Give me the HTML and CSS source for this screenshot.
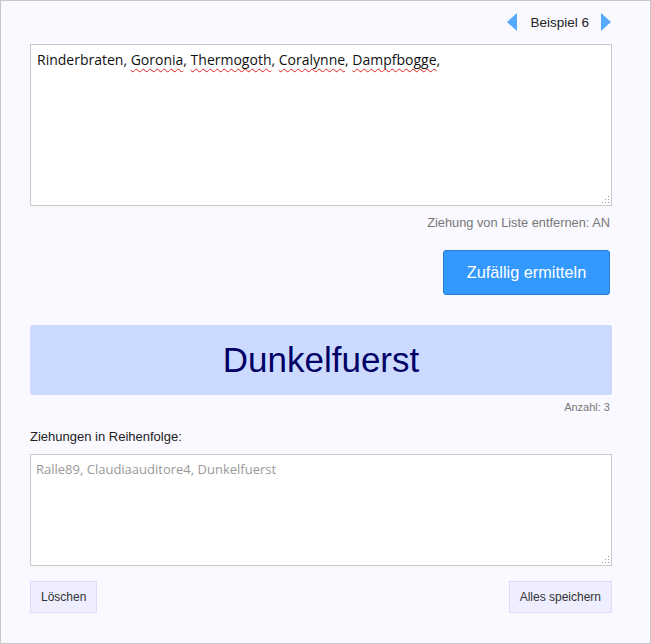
FILE: index.html
```html
<!DOCTYPE html>
<html lang="de">
<head>
    <meta charset="UTF-8">
    <meta name="viewport" content="width=device-width, initial-scale=1.0">
    <title>Zufallsgenerator</title>
    <link rel="stylesheet" href="styles.css">
</head>
<body>
    <div class="panel">
        <div class="examples">
            <span class="arrow arrow-left"></span>
            <span class="example-label">Beispiel 6</span>
            <span class="arrow arrow-right"></span>
        </div>

        <div class="names-box">
            <div class="names-text">Rinderbraten, <span class="typo">Goronia</span>, <span class="typo">Thermogoth</span>, <span class="typo">Coralynne</span>, <span class="typo">Dampfbogge</span>,</div>
            <span class="grip"></span>
        </div>

        <div class="option">Ziehung von Liste entfernen: AN</div>

        <div class="actions">
            <button class="draw-btn" type="button">Zufällig ermitteln</button>
        </div>

        <div class="result">Dunkelfuerst</div>
        <div class="count">Anzahl: 3</div>

        <div class="history-label">Ziehungen in Reihenfolge:</div>
        <div class="history-box">
            <div class="history-text">Ralle89, Claudiaauditore4, Dunkelfuerst</div>
            <span class="grip"></span>
        </div>

        <div class="footer">
            <button class="small-btn" type="button">Löschen</button>
            <button class="small-btn" type="button">Alles speichern</button>
        </div>
    </div>
</body>
</html>
```

FILE: styles.css
```css
* {
    box-sizing: border-box;
}

body {
    margin: 0;
    background-color: #fff;
    font-family: 'Liberation Sans', Arial, sans-serif;
}

.panel {
    width: 651px;
    height: 644px;
    background-color: #f9f9ff;
    border: 1px solid #c8c8c8;
    padding: 11px 38px 0 29px;
}

.examples {
    display: flex;
    justify-content: flex-end;
    align-items: center;
    height: 20px;
    margin-right: 1px;
}

.arrow {
    width: 0;
    height: 0;
    border-top: 9px solid transparent;
    border-bottom: 9px solid transparent;
}

.arrow-left {
    border-right: 10px solid #55aaff;
}

.arrow-right {
    border-left: 10px solid #55aaff;
}

.example-label {
    font-size: 13.5px;
    color: #222;
    margin: 0 12px 0 13px;
}

.names-box,
.history-box {
    position: relative;
    background-color: #fff;
    border: 1px solid #c8c8c8;
    font-family: 'Open Sans', sans-serif;
}

.names-box {
    height: 162px;
    margin-top: 12px;
    padding: 5px 6px;
    font-size: 14px;
    color: #111;
}

.typo {
    text-decoration: underline wavy #e02020;
    text-decoration-thickness: 1px;
    text-underline-offset: 3px;
}

.grip {
    position: absolute;
    right: 2px;
    bottom: 2px;
    width: 8px;
    height: 8px;
    background:
        radial-gradient(circle, #999 0.8px, transparent 1px) 0 0 / 3px 3px;
    clip-path: polygon(100% 0, 100% 100%, 0 100%);
}

.option {
    text-align: right;
    font-size: 12.8px;
    color: #777;
    margin-top: 9px;
    margin-right: 2px;
}

.actions {
    display: flex;
    justify-content: flex-end;
    margin-top: 20px;
    margin-right: 2px;
}

.draw-btn {
    width: 167px;
    height: 45px;
    background-color: #3399ff;
    border: 1px solid #2a7fd4;
    border-radius: 3px;
    color: #fff;
    font-family: 'Liberation Sans', Arial, sans-serif;
    font-size: 16.3px;
}

.result {
    margin-top: 30px;
    height: 70px;
    background-color: #ccdaff;
    border-radius: 3px;
    color: #000066;
    font-size: 35px;
    display: flex;
    align-items: center;
    justify-content: center;
}

.count {
    text-align: right;
    font-size: 11px;
    color: #777;
    margin-top: 6px;
    margin-right: 2px;
}

.history-label {
    font-size: 13px;
    color: #222;
    margin-top: 16px;
}

.history-box {
    height: 112px;
    margin-top: 10px;
    padding: 5px 5px;
    font-size: 13px;
    color: #999;
}

.footer {
    display: flex;
    justify-content: space-between;
    margin-top: 15px;
}

.small-btn {
    height: 32px;
    padding: 0 10px;
    background-color: #eeeeff;
    border: 1px solid #dcdcff;
    color: #333;
    font-family: 'Liberation Sans', Arial, sans-serif;
    font-size: 12px;
}
```
